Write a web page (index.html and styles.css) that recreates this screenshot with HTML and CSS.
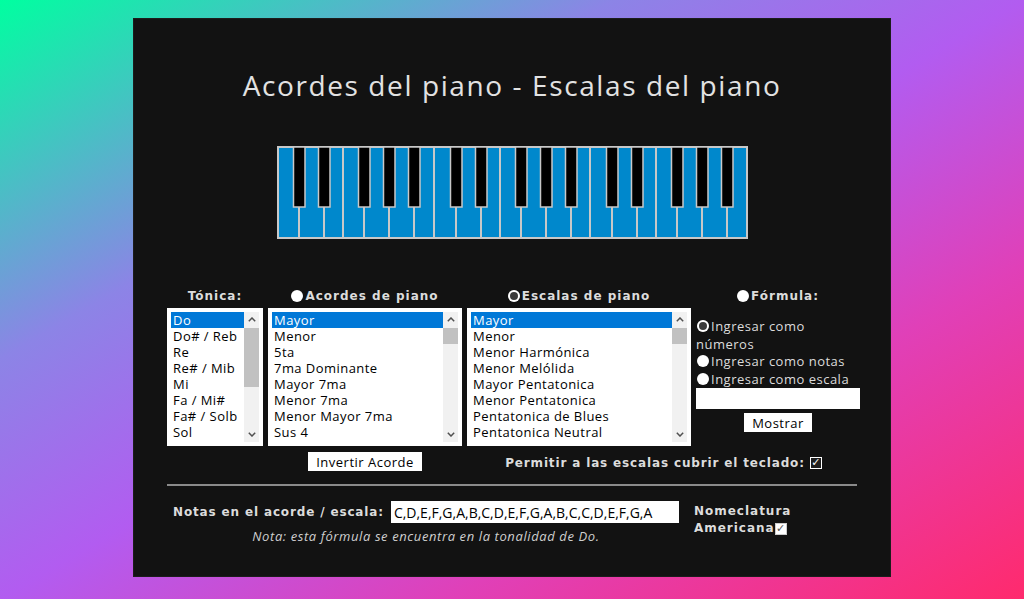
FILE: index.html
```html
<!DOCTYPE html>
<html lang="es">
<head>
    <meta charset="UTF-8">
    <meta name="viewport" content="width=device-width, initial-scale=1.0">
    <title>Acordes del piano - Escalas del piano</title>
    <link rel="stylesheet" href="styles.css">
</head>
<body>
    <div class="app">
        <h1 class="title">Acordes del piano - Escalas del piano</h1>

        <div class="piano-wrap">
            <svg class="piano" width="471" height="93" viewBox="0 0 471 93">
                <rect x="1" y="1" width="469" height="91" fill="#0088cc" stroke="#c8c8c8" stroke-width="2"/>
                <g stroke="#c8c8c8" stroke-width="2">
                    <line x1="22" y1="61" x2="22" y2="92"/><line x1="47" y1="61" x2="47" y2="92"/>
                    <line x1="66" y1="1" x2="66" y2="92"/><line x1="87" y1="61" x2="87" y2="92"/>
                    <line x1="112" y1="61" x2="112" y2="92"/><line x1="137" y1="61" x2="137" y2="92"/>
                    <line x1="157" y1="1" x2="157" y2="92"/>
                    <line x1="179" y1="61" x2="179" y2="92"/><line x1="204" y1="61" x2="204" y2="92"/>
                    <line x1="223" y1="1" x2="223" y2="92"/><line x1="244" y1="61" x2="244" y2="92"/>
                    <line x1="269" y1="61" x2="269" y2="92"/><line x1="294" y1="61" x2="294" y2="92"/>
                    <line x1="313" y1="1" x2="313" y2="92"/>
                    <line x1="335" y1="61" x2="335" y2="92"/><line x1="360" y1="61" x2="360" y2="92"/>
                    <line x1="379" y1="1" x2="379" y2="92"/><line x1="400" y1="61" x2="400" y2="92"/>
                    <line x1="425" y1="61" x2="425" y2="92"/><line x1="450" y1="61" x2="450" y2="92"/>
                </g>
                <g fill="#000" stroke="#c8c8c8" stroke-width="1.5">
                    <rect x="16.5" y="1" width="11.5" height="60"/><rect x="41.5" y="1" width="11.5" height="60"/>
                    <rect x="81.5" y="1" width="11.5" height="60"/><rect x="106.5" y="1" width="11.5" height="60"/>
                    <rect x="131.5" y="1" width="11.5" height="60"/>
                    <rect x="173.5" y="1" width="11.5" height="60"/><rect x="198.5" y="1" width="11.5" height="60"/>
                    <rect x="238.5" y="1" width="11.5" height="60"/><rect x="263.5" y="1" width="11.5" height="60"/>
                    <rect x="288.5" y="1" width="11.5" height="60"/>
                    <rect x="329.5" y="1" width="11.5" height="60"/><rect x="354.5" y="1" width="11.5" height="60"/>
                    <rect x="394.5" y="1" width="11.5" height="60"/><rect x="419.5" y="1" width="11.5" height="60"/>
                    <rect x="444.5" y="1" width="11.5" height="60"/>
                </g>
            </svg>
        </div>

        <div class="controls">
            <div class="col-head">Tónica:</div>
            <label class="col-head"><input type="radio" name="modo">Acordes de piano</label>
            <label class="col-head"><input type="radio" name="modo" checked>Escalas de piano</label>
            <label class="col-head"><input type="radio" name="modo">Fórmula:</label>

            <div class="listbox">
                <div class="opts">
                    <div class="opt sel">Do</div>
                    <div class="opt">Do# / Reb</div>
                    <div class="opt">Re</div>
                    <div class="opt">Re# / Mib</div>
                    <div class="opt">Mi</div>
                    <div class="opt">Fa / Mi#</div>
                    <div class="opt">Fa# / Solb</div>
                    <div class="opt">Sol</div>
                </div>
                <div class="sbar">
                    <div class="sbar-btn"><svg width="8" height="5" viewBox="0 0 8 5"><path d="M0.8 4.2 L4 1 L7.2 4.2" fill="none" stroke="#505050" stroke-width="1.5"/></svg></div>
                    <div class="sbar-thumb thumb-long"></div>
                    <div class="sbar-fill"></div>
                    <div class="sbar-btn"><svg width="8" height="5" viewBox="0 0 8 5"><path d="M0.8 0.8 L4 4 L7.2 0.8" fill="none" stroke="#505050" stroke-width="1.5"/></svg></div>
                </div>
            </div>

            <div class="listbox">
                <div class="opts">
                    <div class="opt sel">Mayor</div>
                    <div class="opt">Menor</div>
                    <div class="opt">5ta</div>
                    <div class="opt">7ma Dominante</div>
                    <div class="opt">Mayor 7ma</div>
                    <div class="opt">Menor 7ma</div>
                    <div class="opt">Menor Mayor 7ma</div>
                    <div class="opt">Sus 4</div>
                </div>
                <div class="sbar">
                    <div class="sbar-btn"><svg width="8" height="5" viewBox="0 0 8 5"><path d="M0.8 4.2 L4 1 L7.2 4.2" fill="none" stroke="#505050" stroke-width="1.5"/></svg></div>
                    <div class="sbar-thumb"></div>
                    <div class="sbar-fill"></div>
                    <div class="sbar-btn"><svg width="8" height="5" viewBox="0 0 8 5"><path d="M0.8 0.8 L4 4 L7.2 0.8" fill="none" stroke="#505050" stroke-width="1.5"/></svg></div>
                </div>
            </div>

            <div class="listbox">
                <div class="opts">
                    <div class="opt sel">Mayor</div>
                    <div class="opt">Menor</div>
                    <div class="opt">Menor Harmónica</div>
                    <div class="opt">Menor Melólida</div>
                    <div class="opt">Mayor Pentatonica</div>
                    <div class="opt">Menor Pentatonica</div>
                    <div class="opt">Pentatonica de Blues</div>
                    <div class="opt">Pentatonica Neutral</div>
                </div>
                <div class="sbar">
                    <div class="sbar-btn"><svg width="8" height="5" viewBox="0 0 8 5"><path d="M0.8 4.2 L4 1 L7.2 4.2" fill="none" stroke="#505050" stroke-width="1.5"/></svg></div>
                    <div class="sbar-thumb"></div>
                    <div class="sbar-fill"></div>
                    <div class="sbar-btn"><svg width="8" height="5" viewBox="0 0 8 5"><path d="M0.8 0.8 L4 4 L7.2 0.8" fill="none" stroke="#505050" stroke-width="1.5"/></svg></div>
                </div>
            </div>

            <div class="formula">
                <label><input type="radio" name="entrada" checked>Ingresar como números</label>
                <label><input type="radio" name="entrada">Ingresar como notas</label>
                <label><input type="radio" name="entrada">Ingresar como escala</label>
                <input type="text" class="formula-input">
                <button class="btn">Mostrar</button>
            </div>

            <div class="under-chords"><button class="btn">Invertir Acorde</button></div>
            <label class="cover">Permitir a las escalas cubrir el teclado:<input type="checkbox" class="cb cb-dark" checked></label>
        </div>

        <hr class="divider">

        <div class="result">
            <div class="result-main">
                <div class="notes-row">
                    <span class="bold-label">Notas en el acorde / escala:</span>
                    <input type="text" class="notes-input" value="C,D,E,F,G,A,B,C,D,E,F,G,A,B,C,C,D,E,F,G,A">
                </div>
                <div class="note">Nota: esta fórmula se encuentra en la tonalidad de Do.</div>
            </div>
            <label class="nomen">Nomeclatura<br>Americana<input type="checkbox" class="cb cb-tight" checked></label>
        </div>
    </div>
</body>
</html>
```

FILE: styles.css
```css
body {
    margin: 0;
    min-height: 100vh;
    box-sizing: border-box;
    padding-top: 18px;
    display: flex;
    justify-content: center;
    align-items: flex-start;
    background: linear-gradient(to bottom right, #00ffa0 0%, #8c84e6 30%, #b25cf0 50%, #e040b8 72%, #ff2a6d 100%);
    font-family: 'Open Sans', sans-serif;
}

.app {
    width: 758px;
    height: 559px;
    box-sizing: border-box;
    padding: 0 33px;
    background: #121212;
    border: 1px solid #1c1c1c;
}

.title {
    margin: 47px 0 0;
    font-size: 28px;
    font-weight: 400;
    line-height: 38px;
    letter-spacing: 1.6px;
    color: #e2e2e2;
    text-align: center;
}

.piano-wrap {
    display: flex;
    justify-content: center;
    margin-top: 42px;
}

.piano {
    display: block;
}

.controls {
    display: grid;
    grid-template-columns: 96px 194px 224px 164px;
    column-gap: 5px;
    margin-top: 49px;
}

.col-head,
.cover,
.bold-label,
.nomen {
    font-family: 'DejaVu Sans', sans-serif;
    font-weight: bold;
    font-size: 12px;
    letter-spacing: 1px;
    color: #dcdcdc;
}

.col-head {
    display: flex;
    justify-content: center;
    align-items: center;
    line-height: 16px;
    margin-bottom: 4px;
}

input[type="radio"] {
    appearance: none;
    -webkit-appearance: none;
    width: 12px;
    height: 12px;
    margin: 0 2px 0 0;
    border-radius: 50%;
    background: #fff;
    flex-shrink: 0;
}

input[type="radio"]:checked {
    background: #3a3a3a;
    box-shadow: inset 0 0 0 2px #fff;
}

.listbox {
    display: flex;
    background: #fff;
    padding: 4px;
    height: 138px;
    box-sizing: border-box;
}

.opts {
    flex: 1;
    min-width: 0;
    overflow: hidden;
}

.sbar {
    width: 15px;
    flex-shrink: 0;
    display: flex;
    flex-direction: column;
    background: #f1f1f1;
}

.sbar-btn {
    height: 15px;
    display: flex;
    align-items: center;
    justify-content: center;
}

.sbar-btn svg {
    display: block;
}

.sbar-thumb {
    height: 16px;
    margin: 1px 0 0;
    background: #c1c1c1;
}

.thumb-long {
    height: 59px;
}

.sbar-fill {
    flex: 1;
}

.opt {
    font-size: 13px;
    line-height: 16px;
    letter-spacing: 0.45px;
    padding: 0 2px;
    color: #000;
    white-space: nowrap;
}

.opt.sel {
    background: #0078d7;
    color: #fff;
}

.formula {
    padding-top: 10px;
    color: #dcdcdc;
    font-size: 13px;
    letter-spacing: 0.5px;
    line-height: 17.5px;
}

.formula label {
    display: block;
}

.formula input[type="radio"] {
    margin: 0 2px 0 1px;
    vertical-align: -1px;
}

.formula-input {
    display: block;
    width: 100%;
    height: 21px;
    box-sizing: border-box;
    border: none;
    margin: 0;
}

.btn {
    display: block;
    margin: 4px auto 0;
    height: 19px;
    padding: 0 8px;
    background: #fff;
    color: #000;
    border: none;
    border-radius: 0;
    font-family: 'Open Sans', sans-serif;
    font-size: 13px;
    letter-spacing: 0.5px;
}

.under-chords {
    grid-column: 2;
    margin-top: 2px;
}

.cover {
    grid-column: 3 / 5;
    display: flex;
    justify-content: center;
    align-items: center;
    margin-top: 9px;
    letter-spacing: 0.85px;
}

.cb {
    appearance: none;
    -webkit-appearance: none;
    width: 12px;
    height: 12px;
    margin: 0 0 0 5px;
    box-sizing: border-box;
    background: #fff;
    border: 1px solid #ccc;
    display: inline-flex;
    align-items: center;
    justify-content: center;
    vertical-align: -1px;
}

.cb:checked::after {
    content: "✓";
    font-family: 'DejaVu Sans', sans-serif;
    font-size: 11px;
    line-height: 10px;
    color: #555;
}

.cb-dark {
    background: #1e1e1e;
    border: 1px solid #fff;
}

.cb-dark:checked::after {
    color: #fff;
}

.cb-tight {
    margin-left: 0;
    vertical-align: 0;
}

.divider {
    margin: 13px 0 0;
    border: none;
    height: 2px;
    background: #8a8a8a;
}

.result {
    display: flex;
    gap: 15px;
    margin-top: 15px;
    padding-left: 6px;
}

.result-main {
    display: flex;
    flex-direction: column;
    align-items: center;
}

.notes-row {
    display: flex;
    align-items: center;
    gap: 7px;
}

.bold-label {
    letter-spacing: 0.85px;
}

.notes-input {
    width: 288px;
    height: 22px;
    box-sizing: border-box;
    border: none;
    padding: 0 3px;
    font-family: 'Open Sans', sans-serif;
    font-size: 14px;
    color: #000;
}

.note {
    margin-top: 5px;
    font-size: 13px;
    font-style: italic;
    line-height: 16px;
    letter-spacing: 0.6px;
    color: #cfcfcf;
}

.nomen {
    line-height: 17px;
    margin-top: 2px;
}
```
